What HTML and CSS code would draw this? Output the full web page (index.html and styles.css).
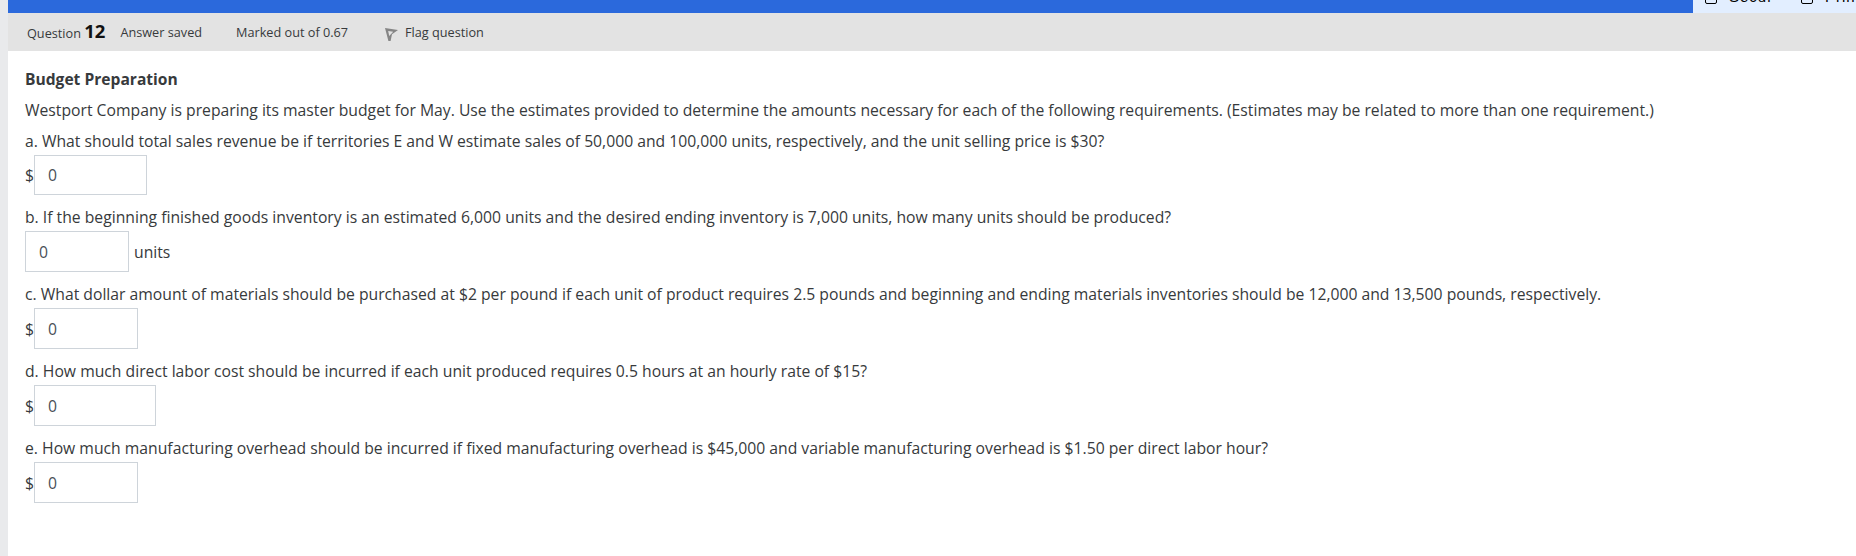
FILE: index.html
```html
<!DOCTYPE html>
<html lang="en">
<head>
    <meta charset="UTF-8">
    <title>Question 12</title>
    <link rel="stylesheet" href="styles.css">
</head>
<body>
    <div class="page">
        <!-- Top bar -->
        <div class="topbar">
            <div class="topbar-fill"></div>
            <div class="topbar-tools">
                <span class="tool"><span class="tool-box"></span><span class="tool-label">Secur</span></span>
                <span class="tool"><span class="tool-box"></span><span class="tool-label">Print</span></span>
            </div>
        </div>

        <!-- Question header -->
        <div class="question-info">
            <span class="q-number">Question <strong>12</strong></span>
            <span class="q-state">Answer saved</span>
            <span class="q-grade">Marked out of 0.67</span>
            <span class="q-flag">
                <svg class="flag-icon" width="13" height="13" viewBox="0 0 13 13">
                    <path d="M0 0 L13 2 L7 6.2 L5.6 13 L3.4 13 Z M3.2 3 L4.2 8 L8.2 3.7 Z" fill="#858585" fill-rule="evenodd"/>
                </svg>
                Flag question
            </span>
        </div>

        <!-- Question body -->
        <div class="question-body">
            <h4 class="q-title">Budget Preparation</h4>
            <p class="q-intro">Westport Company is preparing its master budget for May. Use the estimates provided to determine the amounts necessary for each of the following requirements. (Estimates may be related to more than one requirement.)</p>

            <p class="q-part">a. What should total sales revenue be if territories E and W estimate sales of 50,000 and 100,000 units, respectively, and the unit selling price is $30?</p>
            <div class="answer">
                <span class="dollar">$</span>
                <input class="answer-input wide" type="text" value="0">
            </div>

            <p class="q-part">b. If the beginning finished goods inventory is an estimated 6,000 units and the desired ending inventory is 7,000 units, how many units should be produced?</p>
            <div class="answer">
                <input class="answer-input" type="text" value="0">
                <span class="unit">units</span>
            </div>

            <p class="q-part">c. What dollar amount of materials should be purchased at $2 per pound if each unit of product requires 2.5 pounds and beginning and ending materials inventories should be 12,000 and 13,500 pounds, respectively.</p>
            <div class="answer">
                <span class="dollar">$</span>
                <input class="answer-input" type="text" value="0">
            </div>

            <p class="q-part">d. How much direct labor cost should be incurred if each unit produced requires 0.5 hours at an hourly rate of $15?</p>
            <div class="answer">
                <span class="dollar">$</span>
                <input class="answer-input wider" type="text" value="0">
            </div>

            <p class="q-part">e. How much manufacturing overhead should be incurred if fixed manufacturing overhead is $45,000 and variable manufacturing overhead is $1.50 per direct labor hour?</p>
            <div class="answer">
                <span class="dollar">$</span>
                <input class="answer-input" type="text" value="0">
            </div>
        </div>
    </div>
</body>
</html>
```

FILE: styles.css
```css
html, body {
    margin: 0;
    height: 100%;
    overflow: hidden;
}
body {
    font-family: "Open Sans", sans-serif;
    font-size: 15.72px;
    color: #373a3c;
    background-color: #fff;
}
.page {
    margin-left: 8px;
    height: 556px;
    box-shadow: -8px 0 0 #e9eaec;
}
.topbar {
    display: flex;
    height: 13px;
    overflow: hidden;
}
.topbar-fill {
    flex: 1;
    background-color: #2b69dc;
}
.topbar-tools {
    width: 163px;
    background-color: #e2eeff;
    display: flex;
    gap: 24px;
    padding-left: 12px;
    box-sizing: border-box;
    color: #000;
    font-family: "Liberation Sans", sans-serif;
    font-size: 15px;
    line-height: 13px;
}
.tool {
    display: flex;
    gap: 12px;
    height: 2px;
}
.tool-box {
    width: 10px;
    height: 12px;
    margin-top: -10px;
    border: 1px solid #000;
    border-radius: 2px;
}
.tool-label {
    width: 48px;
    margin-top: -10px;
    letter-spacing: 1px;
}
.question-info {
    display: flex;
    align-items: center;
    height: 38px;
    padding-left: 19px;
    background-color: #e3e3e3;
    font-size: 12.7px;
}
.q-number {
    padding-bottom: 3px;
}
.q-number strong {
    font-size: 18.5px;
    font-weight: 700;
    color: #111;
}
.q-state {
    margin-left: 15px;
}
.q-grade {
    margin-left: 34px;
}
.q-flag {
    display: flex;
    align-items: center;
    margin-left: 37px;
    gap: 7px;
}
.flag-icon {
    margin-top: 4px;
}
.question-body {
    padding: 17px 17px 0;
}
.q-title {
    margin: 0;
    font-size: 15.6px;
    font-weight: 700;
    line-height: 22px;
}
.q-intro, .q-part {
    margin: 0;
    line-height: 22px;
}
.q-intro {
    margin-top: 9px;
}
.q-part {
    margin-top: 11px;
}
.q-intro + .q-part {
    margin-top: 9px;
}
.answer {
    display: flex;
    align-items: center;
    margin-top: 3px;
}
.dollar {
    width: 9px;
}
.answer-input {
    width: 104px;
    height: 41px;
    box-sizing: border-box;
    padding: 0 13px;
    border: 1px solid #ced4da;
    font-family: "Open Sans", sans-serif;
    font-size: 15.72px;
    color: #495057;
    outline: none;
}
.answer-input.wide {
    width: 113px;
    height: 40px;
}
.answer-input.wider {
    width: 122px;
}
.unit {
    margin-left: 5px;
}
```
